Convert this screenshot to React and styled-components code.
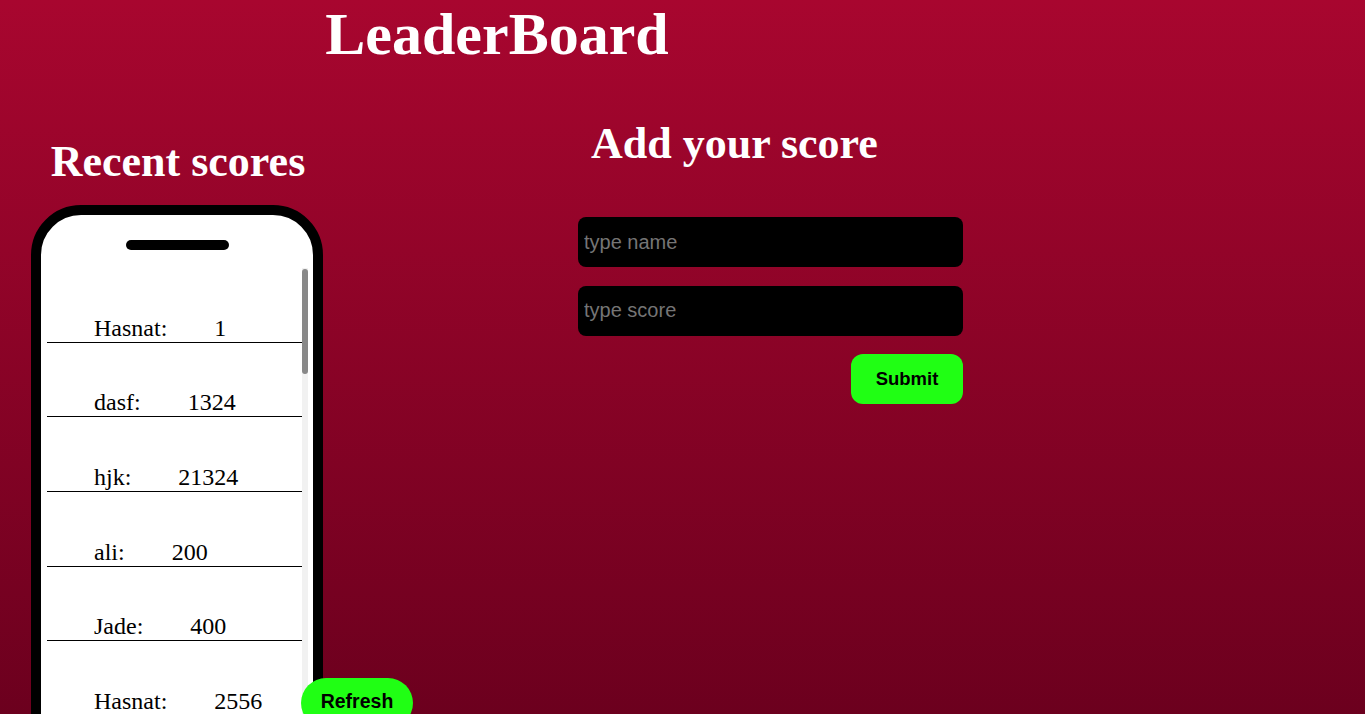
import React from 'react';
import styled, { createGlobalStyle } from 'styled-components';

const scores = [
  { user: 'Hasnat', score: 1 },
  { user: 'dasf', score: 1324 },
  { user: 'hjk', score: 21324 },
  { user: 'ali', score: 200 },
  { user: 'Jade', score: 400 },
  { user: 'Hasnat', score: 2556 },
];

export default function App() {
  return (
    <>
      <GlobalStyle />
      <Page>
        <Title>LeaderBoard</Title>
        <Main>
          <Recent>
            <Heading>Recent scores</Heading>
            <PhoneWrap>
              <Phone>
                <Notch />
                <ScrollArea>
                  <ScoreList>
                    {scores.map((s, i) => (
                      <ScoreRow key={i}>
                        {s.user}:<Score>{s.score}</Score>
                      </ScoreRow>
                    ))}
                  </ScoreList>
                  <Track>
                    <Thumb />
                  </Track>
                </ScrollArea>
              </Phone>
              <RefreshButton type='button'>Refresh</RefreshButton>
            </PhoneWrap>
          </Recent>
          <AddScore>
            <Heading $offset>Add your score</Heading>
            <Form onSubmit={e => e.preventDefault()}>
              <Input type='text' placeholder='type name' />
              <Input type='text' placeholder='type score' />
              <Button type='submit'>Submit</Button>
            </Form>
          </AddScore>
        </Main>
      </Page>
    </>
  );
}

const GlobalStyle = createGlobalStyle`
  html, body {
    margin: 0;
    padding: 0;
  }
  body {
    font-family: "Liberation Serif", "Times New Roman", serif;
  }
`;

const Page = styled.div`
  height: 100vh;
  overflow: hidden;
  background: linear-gradient(180deg, #a8062f 0%, #6c001e 100%);
  color: #fff;
`;

const Title = styled.h1`
  width: 994px;
  margin: 0;
  text-align: center;
  font-size: 60px;
  font-weight: 700;
  line-height: 69px;
`;

const Main = styled.main`
  display: flex;
  align-items: flex-start;
`;

const Recent = styled.section`
  width: 356px;
  padding-top: 68px;
`;

const Heading = styled.h2`
  margin: 0;
  font-size: 44px;
  font-weight: 700;
  line-height: 50px;
  text-align: ${p => (p.$offset ? 'left' : 'center')};
  padding-left: ${p => (p.$offset ? '13px' : '0')};
`;

const PhoneWrap = styled.div`
  position: relative;
  margin: 18px 0 0 31px;
  width: 292px;
`;

const Phone = styled.div`
  box-sizing: border-box;
  width: 292px;
  height: 570px;
  border: 10px solid #000;
  border-radius: 50px;
  background: #fff;
  display: flex;
  flex-direction: column;
  align-items: center;
  padding: 25px 5px 0 6px;
`;

const Notch = styled.div`
  width: 103px;
  height: 10px;
  border-radius: 5px;
  background: #000;
  flex-shrink: 0;
`;

const ScrollArea = styled.div`
  display: flex;
  width: 100%;
  height: 450px;
  margin-top: 18px;
  overflow: hidden;
`;

const ScoreList = styled.ul`
  flex: 1;
  list-style: none;
  margin: 0;
  padding: 0;
  color: #000;
`;

const Track = styled.div`
  width: 6px;
  flex-shrink: 0;
  background: #f1f1f1;
`;

const Thumb = styled.div`
  height: 105px;
  margin-top: 1px;
  border-radius: 3px;
  background: #888;
`;

const ScoreRow = styled.li`
  box-sizing: border-box;
  height: 74.7px;
  display: flex;
  align-items: flex-end;
  padding-left: 47px;
  border-bottom: 1px solid #000;
  font-size: 24px;
  line-height: 27px;
`;

const Score = styled.span`
  margin-left: 47px;
`;

const greenButton = `
  border: none;
  background: #20ff14;
  color: #000;
  font-family: "Liberation Sans", Arial, sans-serif;
  font-weight: 700;
  width: 112px;
  height: 50px;
  cursor: pointer;
  padding: 0;
`;

const RefreshButton = styled.button`
  ${greenButton}
  font-size: 19.5px;
  position: absolute;
  left: 270px;
  top: 473px;
  border-radius: 25px;
  padding-bottom: 4px;
`;

const AddScore = styled.section`
  margin-left: 222px;
  width: 385px;
  padding-top: 50px;
`;

const Form = styled.form`
  display: flex;
  flex-direction: column;
  align-items: flex-end;
  gap: 18.5px;
  margin-top: 48px;
`;

const Input = styled.input`
  box-sizing: border-box;
  width: 385px;
  height: 50px;
  border: none;
  border-radius: 8px;
  background: #000;
  color: #fff;
  padding: 0 6px;
  font-family: "Liberation Sans", Arial, sans-serif;
  font-size: 20px;
  outline: none;

  &::placeholder {
    color: #757575;
  }
`;

const Button = styled.button`
  ${greenButton}
  font-size: 18.5px;
  border-radius: 12px;
`;
